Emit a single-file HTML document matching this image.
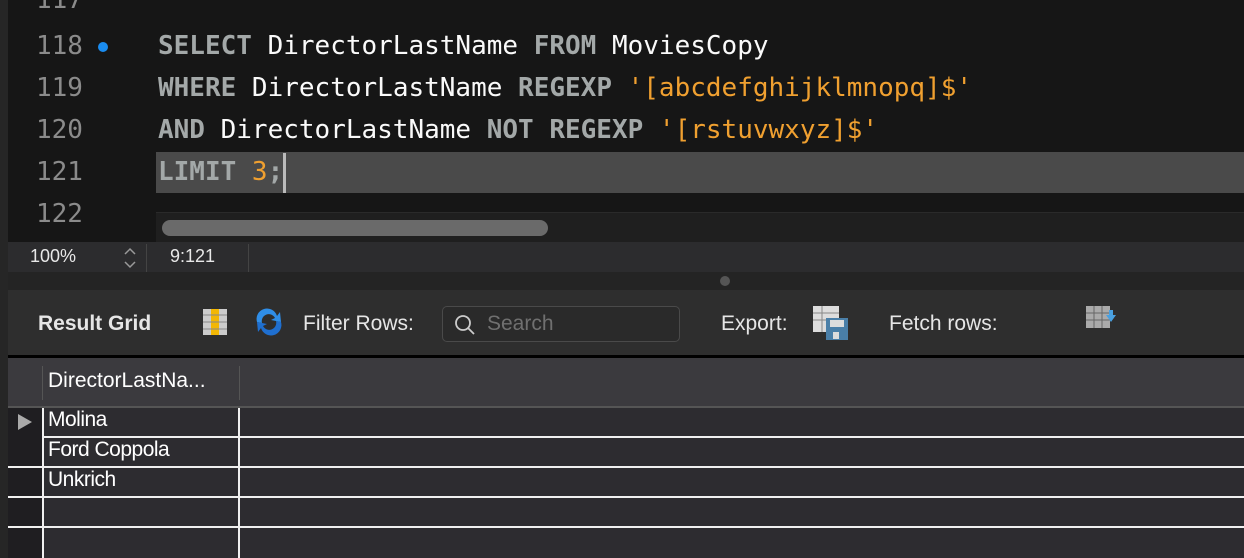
<!DOCTYPE html>
<html><head><style>
body{margin:0;width:1244px;height:558px;overflow:hidden;background:#1c1c1c;font-family:"Liberation Sans",sans-serif;position:relative}
.a{position:absolute}
.mono{font-family:"DejaVu Sans Mono","Liberation Mono",monospace;font-size:26px;white-space:pre}
.ln{color:#8b8b8b;left:36px}
.k{color:#a3a8a8;font-weight:bold}
.w{color:#fafafa}
.s{color:#f0a030}
</style></head><body>
<div class="a" style="left:0;top:0;width:8px;height:558px;background:#262626"></div>
<div class="a" style="left:8px;top:0;width:1236px;height:242px;background:#161616"></div>
<div class="a" style="left:156px;top:152px;width:1088px;height:41px;background:#4a4a4a"></div>
<div class="a mono ln" style="top:-15px">117</div>
<div class="a mono ln" style="top:31px">118</div>
<div class="a" style="left:98px;top:42px;width:10px;height:10px;border-radius:50%;background:#1a8cf0"></div>
<div class="a mono ln" style="top:73px">119</div>
<div class="a mono ln" style="top:115px">120</div>
<div class="a mono ln" style="top:157px">121</div>
<div class="a mono ln" style="top:199px">122</div>
<div class="a mono" style="left:158px;top:31px"><span class="k">SELECT</span><span class="w"> DirectorLastName </span><span class="k">FROM</span><span class="w"> MoviesCopy</span></div>
<div class="a mono" style="left:158px;top:73px"><span class="k">WHERE</span><span class="w"> DirectorLastName </span><span class="k">REGEXP</span><span class="s"> '[abcdefghijklmnopq]$'</span></div>
<div class="a mono" style="left:158px;top:115px"><span class="k">AND</span><span class="w"> DirectorLastName </span><span class="k">NOT REGEXP</span><span class="s"> '[rstuvwxyz]$'</span></div>
<div class="a mono" style="left:158px;top:157px"><span class="k">LIMIT</span><span class="s"> 3</span><span class="k">;</span></div>
<div class="a" style="left:283px;top:153px;width:3px;height:40px;background:#bbb"></div>
<div class="a" style="left:156px;top:212px;width:1088px;height:30px;background:#1f1f1f;border-top:1px solid #2a2a2a"></div>
<div class="a" style="left:162px;top:220px;width:386px;height:16px;border-radius:8px;background:#6a6a6a"></div>
<div class="a" style="left:8px;top:242px;width:1236px;height:30px;background:#2c2c2e"></div>
<div class="a" style="left:30px;top:246px;color:#e8e8e8;font-size:18px">100%</div>
<svg class="a" style="left:121px;top:245px" width="18" height="26"><path d="M4 9 L9 4 L14 9 M4 17 L9 22 L14 17" stroke="#9a9a9a" stroke-width="1.5" fill="none"/></svg>
<div class="a" style="left:146px;top:244px;width:1px;height:28px;background:#444"></div>
<div class="a" style="left:170px;top:246px;color:#e8e8e8;font-size:18px">9:121</div>
<div class="a" style="left:248px;top:244px;width:1px;height:28px;background:#444"></div>
<div class="a" style="left:8px;top:272px;width:1236px;height:18px;background:#242424"></div>
<div class="a" style="left:720px;top:276px;width:10px;height:10px;border-radius:50%;background:#555"></div>
<div class="a" style="left:8px;top:290px;width:1236px;height:66px;background:#2e2e2e"></div>
<div class="a" style="left:38px;top:312px;color:#e6e6e6;font-size:21px;font-weight:bold">Result Grid</div>
<svg class="a" style="left:202px;top:308px" width="26" height="28"><rect x="1" y="1" width="24" height="26" fill="#ccc"/><rect x="9" y="1" width="8" height="26" fill="#f2b705"/><g stroke="#888"><line x1="1" y1="7" x2="25" y2="7"/><line x1="1" y1="14" x2="25" y2="14"/><line x1="1" y1="21" x2="25" y2="21"/></g></svg>
<svg class="a" style="left:253px;top:308px" width="32" height="28"><path d="M4 14 A10 10 0 0 1 24 8 L27 4 L28 14 L18 12 L22 10 A7 7 0 0 0 9 15Z" fill="#2f8ee8"/><path d="M28 14 A10 10 0 0 1 8 20 L5 24 L4 14 L14 16 L10 18 A7 7 0 0 0 23 13Z" fill="#1f6fd0"/></svg>
<div class="a" style="left:303px;top:312px;color:#e6e6e6;font-size:21px">Filter Rows:</div>
<div class="a" style="left:442px;top:306px;width:236px;height:34px;border:1px solid #4a4a4a;border-radius:5px;background:#2a2a2a"></div>
<svg class="a" style="left:454px;top:314px" width="22" height="22"><circle cx="9" cy="9" r="7" stroke="#ccc" stroke-width="1.8" fill="none"/><line x1="14" y1="14" x2="20" y2="20" stroke="#ccc" stroke-width="1.8"/></svg>
<div class="a" style="left:487px;top:312px;color:#707070;font-size:21px">Search</div>
<div class="a" style="left:721px;top:312px;color:#e6e6e6;font-size:21px">Export:</div>
<svg class="a" style="left:812px;top:305px" width="40" height="36"><rect x="1" y="1" width="26" height="26" fill="#ddd"/><g stroke="#888"><line x1="1" y1="8" x2="27" y2="8"/><line x1="1" y1="15" x2="27" y2="15"/><line x1="10" y1="1" x2="10" y2="27"/></g><rect x="14" y="13" width="22" height="22" fill="#4a7fa8"/><rect x="18" y="15" width="14" height="7" fill="#ddd"/><rect x="21" y="27" width="6" height="7" fill="#ddd"/></svg>
<div class="a" style="left:889px;top:312px;color:#e6e6e6;font-size:21px">Fetch rows:</div>
<svg class="a" style="left:1085px;top:305px" width="36" height="28"><rect x="1" y="1" width="24" height="22" fill="#aaa"/><g stroke="#666"><line x1="1" y1="8" x2="25" y2="8"/><line x1="1" y1="15" x2="25" y2="15"/><line x1="9" y1="1" x2="9" y2="23"/><line x1="17" y1="1" x2="17" y2="23"/></g><path d="M21 10 h10 l-5 7z M24 5 h4 v6 h-4z" fill="#4aa0e0"/></svg>
<div class="a" style="left:8px;top:355px;width:1236px;height:3px;background:#000"></div>
<div class="a" style="left:8px;top:358px;width:1236px;height:48px;background:#3b3a3e"></div>
<div class="a" style="left:42px;top:366px;width:1px;height:34px;background:#555"></div>
<div class="a" style="left:239px;top:366px;width:1px;height:34px;background:#555"></div>
<div class="a" style="left:48px;top:369px;color:#fff;font-size:21px">DirectorLastNa...</div>
<div class="a" style="left:8px;top:406px;width:1236px;height:2px;background:#555"></div>
<div class="a" style="left:8px;top:408px;width:1236px;height:150px;background:#2d2c30"></div>
<div class="a" style="left:8px;top:408px;width:34px;height:150px;background:#1f1e21"></div>
<div class="a" style="left:42px;top:408px;width:2px;height:150px;background:#f0f0f0"></div>
<div class="a" style="left:238px;top:408px;width:2px;height:150px;background:#f0f0f0"></div>
<div class="a" style="left:42px;top:436px;width:1202px;height:2px;background:#f0f0f0"></div>
<div class="a" style="left:8px;top:466px;width:1236px;height:2px;background:#f0f0f0"></div>
<div class="a" style="left:8px;top:496px;width:1236px;height:2px;background:#f0f0f0"></div>
<div class="a" style="left:8px;top:526px;width:1236px;height:2px;background:#f0f0f0"></div>
<div class="a" style="left:18px;top:414px;width:0;height:0;border-left:14px solid #aaa;border-top:8px solid transparent;border-bottom:8px solid transparent"></div>
<div class="a" style="left:48px;top:408px;color:#fff;font-size:21px;letter-spacing:-0.5px">Molina</div>
<div class="a" style="left:48px;top:438px;color:#fff;font-size:21px;letter-spacing:-0.5px">Ford Coppola</div>
<div class="a" style="left:48px;top:468px;color:#fff;font-size:21px;letter-spacing:-0.5px">Unkrich</div>
</body></html>
